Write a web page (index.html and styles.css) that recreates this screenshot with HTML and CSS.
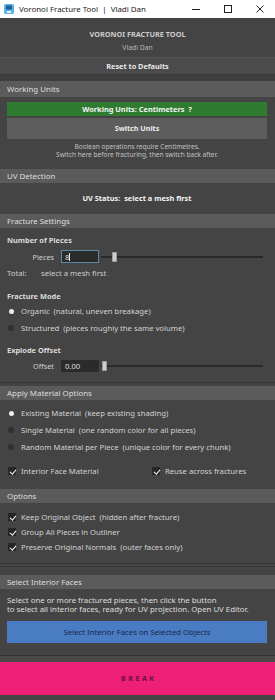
FILE: index.html
```html
<!DOCTYPE html>
<html>
<head>
<meta charset="utf-8">
<link rel="stylesheet" href="styles.css">
</head>
<body>
<div class="titlebar">
  <svg class="app-icon" width="10" height="10" viewBox="0 0 10 10">
    <rect x="0" y="0" width="10" height="10" rx="1.5" fill="#5ab4ea"/>
    <path d="M2 1.5 H8 V5.5 H2 Z" fill="#1f5d92"/>
    <rect x="3" y="7" width="4" height="2" fill="#e8f4fc"/>
  </svg>
  <span class="win-title">Voronoi Fracture Tool&nbsp; |&nbsp; Vladi Dan</span>
  <div class="win-controls">
    <svg width="10" height="10" viewBox="0 0 10 10"><path d="M1 5.5 H9" stroke="#222" stroke-width="1"/></svg>
    <svg width="10" height="10" viewBox="0 0 10 10"><rect x="1.5" y="1.5" width="7" height="7" fill="none" stroke="#222" stroke-width="1"/></svg>
    <svg width="10" height="10" viewBox="0 0 10 10"><path d="M1.5 1.5 L8.5 8.5 M8.5 1.5 L1.5 8.5" stroke="#222" stroke-width="1"/></svg>
  </div>
</div>

<div class="app-head">
  <div class="app-name">VORONOI FRACTURE TOOL</div>
  <div class="app-author">Vladi Dan</div>
</div>
<div class="reset-btn">Reset to Defaults</div>
<div class="scroll-edge"></div>

<section class="frame frame-units">
  <div class="frame-h">Working Units</div>
  <div class="frame-b units-body">
    <div class="units-status">Working Units: Centimeters&nbsp; ?</div>
    <div class="btn btn-switch">Switch Units</div>
    <div class="note">Boolean operations require Centimetres.<br>Switch here before fracturing, then switch back after.</div>
  </div>
</section>

<section class="frame">
  <div class="frame-h">UV Detection</div>
  <div class="frame-b uv-body">
    <div class="uv-status">UV Status:&nbsp; select a mesh first</div>
  </div>
</section>

<section class="frame">
  <div class="frame-h">Fracture Settings</div>
  <div class="frame-b fracture-body">
    <div class="sub-h">Number of Pieces</div>
    <div class="slider-row row-pieces">
      <span class="field-label">Pieces</span>
      <span class="field field-focus">8<i class="caret"></i></span>
      <div class="slider"><span class="handle handle-pieces"></span></div>
    </div>
    <div class="total-row"><span class="total-label">Total:</span><span>select a mesh first</span></div>
    <div class="sub-h sub-mode">Fracture Mode</div>
    <div class="opt opt-first"><span class="radio on"></span>Organic&nbsp; (natural, uneven breakage)</div>
    <div class="opt opt-next"><span class="radio"></span>Structured&nbsp; (pieces roughly the same volume)</div>
    <div class="sub-h sub-offset">Explode Offset</div>
    <div class="slider-row row-offset">
      <span class="field-label">Offset</span>
      <span class="field">0.00</span>
      <div class="slider"><span class="handle handle-offset"></span></div>
    </div>
  </div>
</section>

<section class="frame">
  <div class="frame-h">Apply Material Options</div>
  <div class="frame-b material-body">
    <div class="opt"><span class="radio on"></span>Existing Material&nbsp; (keep existing shading)</div>
    <div class="opt opt-next"><span class="radio"></span>Single Material&nbsp; (one random color for all pieces)</div>
    <div class="opt opt-next"><span class="radio"></span>Random Material per Piece&nbsp; (unique color for every chunk)</div>
    <div class="check-pair">
      <div class="opt"><span class="check"></span>Interior Face Material</div>
      <div class="opt opt-right"><span class="check"></span>Reuse across fractures</div>
    </div>
  </div>
</section>

<section class="frame">
  <div class="frame-h">Options</div>
  <div class="frame-b options-body">
    <div class="opt"><span class="check"></span>Keep Original Object&nbsp; (hidden after fracture)</div>
    <div class="opt opt-opt"><span class="check"></span>Group All Pieces in Outliner</div>
    <div class="opt opt-opt"><span class="check"></span>Preserve Original Normals&nbsp; (outer faces only)</div>
  </div>
</section>
<div class="double-rule"></div>

<section class="frame frame-last">
  <div class="frame-h">Select Interior Faces</div>
  <div class="frame-b interior-body">
    <div class="info">Select one or more fractured pieces, then click the button<br>to select all interior faces, ready for UV projection. Open UV Editor.</div>
    <div class="btn btn-blue">Select Interior Faces on Selected Objects</div>
  </div>
</section>

<div class="break-zone">
  <div class="break-btn">BREAK</div>
</div>
</body>
</html>
```

FILE: styles.css
```css
* { box-sizing: border-box; }
html, body { margin: 0; padding: 0; }
body {
  width: 275px;
  height: 700px;
  overflow: hidden;
  background: #444444;
  font-family: "Noto Sans", "Open Sans", sans-serif;
  font-size: 7.7px;
  color: #d2d2d2;
}

/* window title bar */
.titlebar {
  height: 18px;
  background: #ffffff;
  display: flex;
  align-items: center;
  padding-left: 4px;
}
.app-icon { flex: none; }
.win-title {
  margin-left: 5px;
  font-size: 7.9px;
  color: #1a1a1a;
  flex: 1;
  white-space: nowrap;
}
.win-controls {
  display: flex;
  gap: 22px;
  padding-right: 10px;
}

/* header */
.app-head {
  height: 39px;
  padding-top: 10px;
  text-align: center;
}
.app-name {
  height: 12px;
  line-height: 12px;
  font-size: 7.3px;
  font-weight: 700;
  color: #cccccc;
}
.app-author {
  margin-top: 2px;
  height: 12px;
  line-height: 12px;
  font-size: 6.8px;
  color: #b8b8b8;
}
.reset-btn {
  height: 17px;
  line-height: 16px;
  text-align: center;
  background: #4b4b4b;
  border-top: 1px solid #555555;
  font-size: 7.3px;
  font-weight: 700;
  color: #e8e8e8;
}
.scroll-edge {
  height: 7px;
  background: #3e3e3e;
  border-top: 1px solid #393939;
}

/* frames */
.frame-h {
  height: 14px;
  line-height: 14px;
  background: #5b5b5b;
  padding-left: 7px;
  color: #dedede;
  font-size: 7.9px;
}
.frame-units .frame-h { height: 16px; line-height: 16px; }
.frame-b {
  padding: 0 8px 0 7px;
}

.units-body { padding-top: 5px; padding-bottom: 7px; }
.units-status {
  height: 14px;
  line-height: 14px;
  background: #2f7b30;
  color: #f4f4f4;
  font-size: 7.4px;
  font-weight: 700;
  text-align: center;
}
.btn {
  text-align: center;
  color: #ececec;
}
.btn-switch {
  margin-top: 2px;
  height: 21px;
  line-height: 21px;
  background: #5d5d5d;
  font-size: 7.2px;
  font-weight: 700;
}
.note {
  margin-top: 4px;
  font-size: 6.55px;
  line-height: 8px;
  text-align: center;
  color: #c2c2c2;
}

.uv-body { padding-top: 10px; padding-bottom: 8px; }
.uv-status {
  height: 10px;
  line-height: 10px;
  text-align: center;
  font-size: 7.4px;
  font-weight: 700;
  color: #f4f4f4;
}

.fracture-body { padding-top: 7px; padding-bottom: 10px; border-bottom: 1px solid #363636; }
.sub-h {
  height: 10px;
  line-height: 10px;
  font-size: 7.4px;
  font-weight: 700;
  color: #dadada;
}
.sub-mode { margin-top: 13px; }
.sub-offset { margin-top: 12px; }

.slider-row {
  display: flex;
  align-items: center;
}
.row-pieces { margin-top: 5px; height: 13px; }
.row-offset { margin-top: 5px; height: 12px; }
.field-label {
  width: 47px;
  text-align: right;
  font-size: 7.3px;
}
.field {
  margin-left: 7px;
  width: 38px;
  height: 100%;
  background: #2b2b2b;
  color: #dcdcdc;
  padding-left: 4px;
  display: flex;
  align-items: center;
}
.field-focus {
  border: 1px solid #5e8aa8;
  padding-left: 3px;
}
.caret {
  display: inline-block;
  width: 1px;
  height: 8px;
  background: #e0e0e0;
}
.slider {
  margin-left: 2px;
  flex: 1;
  height: 10px;
  margin-right: 4px;
  background: linear-gradient(#2a2a2a, #2a2a2a) center / 100% 2px no-repeat;
  position: relative;
}
.handle {
  position: absolute;
  top: 0;
  width: 5px;
  height: 10px;
  background: #cfcfcf;
  border: 1px solid #9a9a9a;
}
.handle-pieces { left: 11px; }
.handle-offset { left: 1px; }

.total-row {
  margin-top: 5px;
  height: 10px;
  line-height: 10px;
  display: flex;
  color: #cccccc;
}
.total-label { width: 34px; }

.opt {
  height: 10px;
  line-height: 10px;
  display: flex;
  align-items: center;
  white-space: nowrap;
}
.opt-first { margin-top: 5px; }
.opt-next { margin-top: 7px; }
.opt-opt { margin-top: 5px; }
.radio {
  width: 6px;
  height: 6px;
  border-radius: 50%;
  background: #303030;
  margin-left: 1px;
  margin-right: 7px;
  flex: none;
}
.radio.on { background: #f0f0f0; width: 5px; height: 5px; margin-left: 2px; margin-right: 7px; }
.check {
  width: 8px;
  height: 8px;
  background: #262626;
  margin-left: 1px;
  margin-right: 5px;
  flex: none;
  position: relative;
}
.check::after {
  content: "";
  position: absolute;
  left: 2.5px;
  top: 0.5px;
  width: 2.5px;
  height: 5px;
  border: solid #f4f4f4;
  border-width: 0 1.5px 1.5px 0;
  transform: rotate(40deg);
}

.material-body { padding-top: 8px; padding-bottom: 10px; }
.check-pair {
  margin-top: 14px;
  display: flex;
}
.check-pair .opt:first-child { width: 144px; }

.frame + .frame { margin-top: 3px; }

.options-body { padding-top: 9px; padding-bottom: 11px; }
.double-rule {
  height: 4px;
  border-top: 1px solid #353535;
  border-bottom: 1px solid #353535;
  margin-bottom: 8px;
}

.interior-body { padding-top: 7px; padding-bottom: 12px; }
.info {
  line-height: 9px;
  font-size: 7.8px;
  color: #dedede;
  white-space: nowrap;
}
.btn-blue {
  margin-top: 7px;
  height: 22px;
  line-height: 22px;
  background: #4a7cc4;
  color: #18284a;
  font-size: 7.75px;
}

.break-zone {
  border-top: 1px solid #333333;
  padding-top: 6px;
  background: #494949;
}
.break-btn {
  height: 33px;
  line-height: 33px;
  background: #ee1f77;
  text-align: center;
  color: #6a1242;
  font-size: 7px;
  font-weight: 700;
  letter-spacing: 2.6px;
  text-indent: 2.6px;
  border-bottom: 7px solid #444444;
  box-sizing: content-box;
}
```
